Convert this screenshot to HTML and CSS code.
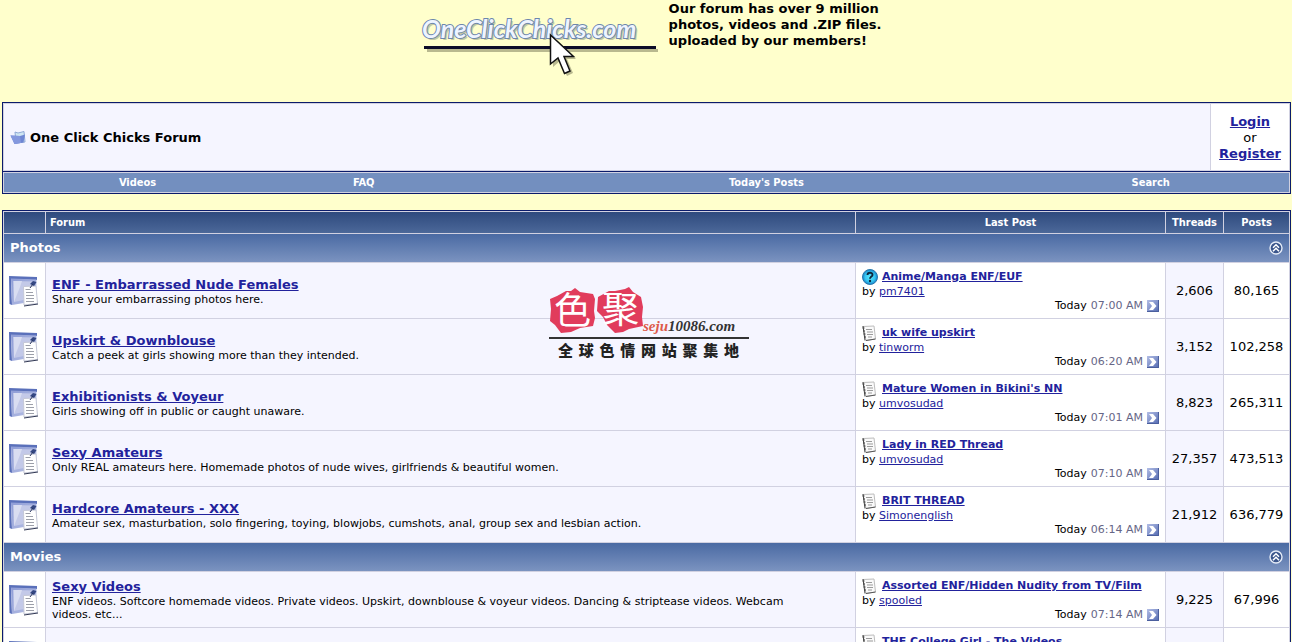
FILE: index.html
```html
<!DOCTYPE html>
<html lang="en">
<head>
<meta charset="utf-8">
<title>One Click Chicks Forum</title>
<link rel="stylesheet" href="styles.css">
</head>
<body>
<svg width="0" height="0" class="defs" aria-hidden="true">
  <defs>
    <linearGradient id="gFolder" x1="0" y1="0" x2="1" y2="1"><stop offset="0" stop-color="#8e9cd6"/><stop offset="1" stop-color="#b9c2e6"/></linearGradient>
    <linearGradient id="gGo" x1="0" y1="0" x2="1" y2="1"><stop offset="0" stop-color="#b4bfe6"/><stop offset="1" stop-color="#5168b0"/></linearGradient>
    <radialGradient id="gAsk"><stop offset="0" stop-color="#5cecff"/><stop offset="0.65" stop-color="#35c5f2"/><stop offset="1" stop-color="#1a7fc4"/></radialGradient>
    <symbol id="forum" viewBox="0 0 30 32">
      <path d="M0 1 28 2 28 5 24 5 2 4 3 30 0.500 29Z" fill="#5a70ba"/>
      <path d="M2 3.500 27.500 4.500 27 26 3 30Z" fill="url(#gFolder)"/>
      <path d="M4.500 6 25 6.500V23L5 27Z" fill="#c3c9e8"/>
      <path d="M4.500 6H13L11 12 5 27Z" fill="#d9ddf1"/>
      <path d="M14.500 11.500 27 11 28.500 28.500 15 30Z" fill="#fff" stroke="#c4c7d6"/>
      <path d="M29 29 15 31" stroke="#333a55" fill="none"/>
      <path d="M16.500 14.500h5M17 17.500h7M17 20.500h8M17 23.500h8M17 26.500h8" stroke="#9c9fa9" fill="none"/>
      <path d="M21 9 24 6 27.500 7 25 11Z" fill="#344782"/><path d="M21 13 24 9" stroke="#28365f"/>
    </symbol>
    <symbol id="note" viewBox="0 0 16 16">
      <path d="M1 1.500 12 1 13.500 14 4 15.500Z" fill="#fafafa" stroke="#bdbdbd"/>
      <path d="M1 1 3 15.500M0.500 3h2M1 6h2M1.500 9h2M2 12h2" stroke="#444" fill="none"/>
      <path d="M4 4.500h6M5 7h6M5 9.500h6M6 12h4" stroke="#9b9b9b" fill="none"/>
      <path d="M4 15.500 13.500 14" stroke="#555"/>
    </symbol>
    <symbol id="ask" viewBox="0 0 16 16">
      <circle cx="8" cy="8" r="7.500" fill="url(#gAsk)" stroke="#2678ad"/>
      <path d="M5.500 6C5.500 3 10.700 3 10.500 6 10.400 7.600 8 7.700 8 9.800" fill="none" stroke="#10263c" stroke-width="1.900"/>
      <circle cx="8" cy="12" r="1.200" fill="#10263c"/>
    </symbol>
    <symbol id="go" viewBox="0 0 12 12">
      <rect width="12" height="12" fill="url(#gGo)"/>
      <path d="M11.500 0V11.500H0" stroke="#4b5f9e" fill="none"/>
      <path d="M2 2H6L9.500 6 6 10H2L5 6Z" fill="#fff"/>
    </symbol>
    <symbol id="up" viewBox="0 0 14 14">
      <circle cx="7" cy="7" r="6" fill="#3b568c" stroke="#e6ecf7" stroke-width="1.400"/>
      <path d="M4 6.700 7 3.800 10 6.700M4 10.200 7 7.300 10 10.200" fill="none" stroke="#fff" stroke-width="1.500"/>
    </symbol>
  </defs>
</svg>

<header class="banner">
  <svg class="logo" viewBox="0 0 240 80" role="img" aria-label="OneClickChicks.com">
    <text class="logo-shadow" x="4" y="40">OneClickChicks.com</text>
    <text class="logo-text" x="2" y="38">OneClickChicks.com</text>
    <path d="M7 50.500H238" stroke="#b9b98f" stroke-width="3"/>
    <path d="M4 47.500H236" stroke="#0c0c28" stroke-width="3"/>
    <path d="M133 37V67L140 61 147 76 153 73 147 59H156Z" fill="#b9b98f"/>
    <path d="M130.500 35V64L138 58 144.500 73.500 150 71 144 56.500H153.500Z" fill="#fff" stroke="#111" stroke-width="1.500"/>
  </svg>
  <p class="tagline">Our forum has over 9 million<br>photos, videos and .ZIP files.<br>uploaded by our members!</p>
</header>

<section class="crumb">
  <h1 class="crumb-title">
    <svg width="16" height="14" viewBox="0 0 16 14" aria-hidden="true"><path d="M5 1 8 2 14 0.500 15 11 6 12Z" fill="#cfe6f2" stroke="#8fa9d6"/><path d="M0.500 4.500 10 5 15 3.500 13.500 11.500 4.500 13Z" fill="#6e86d3"/><path d="M0.500 4.500 10 5 11 12 4.500 13Z" fill="#8498de"/></svg>
    <span>One Click Chicks Forum</span>
  </h1>
  <div class="account"><a href="#">Login</a><span>or</span><a href="#">Register</a></div>
</section>
<nav class="menu"><div class="menu-bar">
  <a class="m1" href="#">Videos</a><a class="m2" href="#">FAQ</a><a class="m3" href="#">Today's Posts</a><a class="m4" href="#">Search</a>
</div></nav>

<main>
<table class="forums">
  <colgroup><col class="c-icon"><col><col class="c-last"><col class="c-threads"><col class="c-posts"></colgroup>
  <thead><tr><th></th><th class="left">Forum</th><th>Last Post</th><th>Threads</th><th>Posts</th></tr></thead>
  <tbody>
  <tr><td class="cat" colspan="5"><div><a href="#">Photos</a><button type="button" aria-label="Collapse Photos"><svg width="14" height="14"><use href="#up"/></svg></button></div></td></tr>
  <tr><td class="icon"><svg width="30" height="32"><use href="#forum"/></svg></td>
    <td class="forum"><a href="#">ENF - Embarrassed Nude Females</a><p>Share your embarrassing photos here.</p></td>
    <td class="last"><div class="thread"><svg width="16" height="16"><use href="#ask"/></svg><a href="#">Anime/Manga ENF/EUF</a></div><div class="by">by <a href="#">pm7401</a></div><div class="time">Today <span>07:00 AM</span><svg width="12" height="12"><use href="#go"/></svg></div></td>
    <td class="num alt">2,606</td><td class="num">80,165</td></tr>
  <tr><td class="icon"><svg width="30" height="32"><use href="#forum"/></svg></td>
    <td class="forum"><a href="#">Upskirt &amp; Downblouse</a><p>Catch a peek at girls showing more than they intended.</p></td>
    <td class="last"><div class="thread"><svg width="16" height="16"><use href="#note"/></svg><a href="#">uk wife upskirt</a></div><div class="by">by <a href="#">tinworm</a></div><div class="time">Today <span>06:20 AM</span><svg width="12" height="12"><use href="#go"/></svg></div></td>
    <td class="num alt">3,152</td><td class="num">102,258</td></tr>
  <tr><td class="icon"><svg width="30" height="32"><use href="#forum"/></svg></td>
    <td class="forum"><a href="#">Exhibitionists &amp; Voyeur</a><p>Girls showing off in public or caught unaware.</p></td>
    <td class="last"><div class="thread"><svg width="16" height="16"><use href="#note"/></svg><a href="#">Mature Women in Bikini's NN</a></div><div class="by">by <a href="#">umvosudad</a></div><div class="time">Today <span>07:01 AM</span><svg width="12" height="12"><use href="#go"/></svg></div></td>
    <td class="num alt">8,823</td><td class="num">265,311</td></tr>
  <tr><td class="icon"><svg width="30" height="32"><use href="#forum"/></svg></td>
    <td class="forum"><a href="#">Sexy Amateurs</a><p>Only REAL amateurs here. Homemade photos of nude wives, girlfriends &amp; beautiful women.</p></td>
    <td class="last"><div class="thread"><svg width="16" height="16"><use href="#note"/></svg><a href="#">Lady in RED Thread</a></div><div class="by">by <a href="#">umvosudad</a></div><div class="time">Today <span>07:10 AM</span><svg width="12" height="12"><use href="#go"/></svg></div></td>
    <td class="num alt">27,357</td><td class="num">473,513</td></tr>
  <tr><td class="icon"><svg width="30" height="32"><use href="#forum"/></svg></td>
    <td class="forum"><a href="#">Hardcore Amateurs - XXX</a><p>Amateur sex, masturbation, solo fingering, toying, blowjobs, cumshots, anal, group sex and lesbian action.</p></td>
    <td class="last"><div class="thread"><svg width="16" height="16"><use href="#note"/></svg><a href="#">BRIT THREAD</a></div><div class="by">by <a href="#">Simonenglish</a></div><div class="time">Today <span>06:14 AM</span><svg width="12" height="12"><use href="#go"/></svg></div></td>
    <td class="num alt">21,912</td><td class="num">636,779</td></tr>
  </tbody>
  <tbody>
  <tr><td class="cat" colspan="5"><div><a href="#">Movies</a><button type="button" aria-label="Collapse Movies"><svg width="14" height="14"><use href="#up"/></svg></button></div></td></tr>
  <tr><td class="icon"><svg width="30" height="32"><use href="#forum"/></svg></td>
    <td class="forum"><a href="#">Sexy Videos</a><p>ENF videos. Softcore homemade videos. Private videos. Upskirt, downblouse &amp; voyeur videos. Dancing &amp; striptease videos. Webcam videos.&nbsp;etc...</p></td>
    <td class="last"><div class="thread"><svg width="16" height="16"><use href="#note"/></svg><a href="#">Assorted ENF/Hidden Nudity from TV/Film</a></div><div class="by">by <a href="#">spooled</a></div><div class="time">Today <span>07:14 AM</span><svg width="12" height="12"><use href="#go"/></svg></div></td>
    <td class="num alt">9,225</td><td class="num">67,996</td></tr>
  <tr><td class="icon"><svg width="30" height="32"><use href="#forum"/></svg></td>
    <td class="forum"></td>
    <td class="last top"><div class="thread"><svg width="16" height="16"><use href="#note"/></svg><a href="#">THE College Girl - The Videos</a></div></td>
    <td class="num alt"></td><td class="num"></td></tr>
  </tbody>
</table>
</main>

<aside class="stamp">
  <svg width="200" height="50" viewBox="0 0 200 50">
    <path d="M1 12 8 9 17 4 22 4 26 1 31 5 44 7 46 12 45 24 46 31 44 39 31 41 22 45 12 46 6 38 1 34 2 22Z" fill="#e13c5c"/>
    <path d="M49 10 60 4 66 4 76 2 80 0 84 5 92 10 94 20 93 30 94 39 80 42 74 45 66 46 58 38 54 30 48 24Z" fill="#e13c5c"/>
    <text class="seal" x="5" y="37">色</text><text class="seal" x="53" y="36">聚</text>
    <text class="site" x="94" y="44"><tspan class="site-red">seju</tspan>10086.com</text>
  </svg>
  <p class="slogan">全球色情网站聚集地</p>
</aside>
</body>
</html>
```
FILE: styles.css
```css
* { box-sizing: border-box; }
html { overflow: hidden; height: 100%; }
body {
  position: relative;
  height: 100%;
  margin: 0 1px 0 2px;
  background: #ffffcc;
  color: #000;
  font: 13px/16px Verdana, "DejaVu Sans", sans-serif;
}
p, h1 { margin: 0; }
a { color: #22229c; }
svg { flex: none; }
.defs { position: absolute; }

.banner {
  display: flex;
  justify-content: center;
  gap: 9px;
  height: 102px;
  padding-left: 8px;
}
.logo { width: 240px; height: 80px; }
.logo text { font: italic bold 25px Lato, sans-serif; }
.logo-shadow { fill: #c4c8a4; }
.logo-text { fill: #eef4ff; stroke: #6d87ac; stroke-width: 2px; paint-order: stroke; }
.tagline { padding-top: 1px; font-weight: bold; white-space: nowrap; }

.crumb {
  display: flex;
  gap: 1px;
  padding: 1px;
  border: 1px solid #0b1b6b;
  background: #d1d1e1;
}
.crumb-title {
  display: flex;
  flex: 1;
  align-items: center;
  gap: 4px;
  padding: 2px 6px 0;
  background: #f5f5ff;
  font-size: 13px;
}
.account {
  display: flex;
  flex-direction: column;
  align-items: center;
  justify-content: center;
  width: 78px;
  min-height: 66px;
  padding-top: 2px;
  background: #fff;
}
.account a { font-weight: bold; }

.menu {
  padding: 1px;
  border: 1px solid #0b1b6b;
  border-top: 0;
  background: #d1d1e1;
}
.menu-bar { display: flex; padding: 2px 5% 1px 0; background: #738fbf; }
.menu a {
  flex: 1 1 0;
  color: #fff;
  font: bold 11px/16px Tahoma, "DejaVu Sans Condensed", "DejaVu Sans", sans-serif;
  text-align: center;
  text-decoration: none;
}
.menu .m1 { flex-grow: 267; }
.menu .m2 { flex-grow: 185; }
.menu .m3 { flex-grow: 620; }
.menu .m4 { flex-grow: 148; }

.forums {
  width: 100%;
  margin-top: 16px;
  table-layout: fixed;
  border: 1px solid #0b1b6b;
  border-spacing: 1px;
  background: #d1d1e1;
}
.c-icon { width: 41px; }
.c-last { width: 309px; }
.c-threads { width: 57px; }
.c-posts { width: 65px; }
.forums th {
  height: 21px;
  padding: 0 4px;
  background: linear-gradient(#2e4a7e, #4c6899);
  color: #fff;
  font: bold 11px/13px Tahoma, "DejaVu Sans Condensed", "DejaVu Sans", sans-serif;
}
.forums .left { text-align: left; }
.forums td { padding: 0 6px; background: #fff; }
.forums .cat { height: 28px; background: linear-gradient(#4a6aa3, #7b93c0); }
.cat div { display: flex; align-items: center; justify-content: space-between; }
.cat a { color: #fff; font-weight: bold; text-decoration: none; }
.cat button { display: flex; padding: 0; border: 0; background: none; }
.forums .icon { height: 55px; padding: 0 5px; }
.icon svg { display: block; }
.forums .forum { padding-top: 1px; background: #f5f5ff; }
.forum a { display: inline-block; font-weight: bold; }
.forum p { font-size: 11px; line-height: 13px; }
.last { font-size: 11px; }
.forums .top { padding-top: 6px; vertical-align: top; }
.thread { display: flex; gap: 4px; height: 16px; font-weight: bold; white-space: nowrap; }
.thread a { line-height: 15px; }
.by { line-height: 14px; }
.time { display: flex; justify-content: flex-end; align-items: center; gap: 4px; line-height: 13px; }
.time span { color: #666686; }
.forums .num { padding: 0; text-align: center; }
.forums .alt { background: #f5f5ff; }

.stamp { position: absolute; top: 287px; left: 547px; width: 200px; }
.stamp svg { display: block; }
.seal { fill: #fff; font: 37px "Noto Sans CJK SC", sans-serif; }
.site { fill: #333; font: italic bold 15px "Liberation Serif", serif; }
.site-red { fill: #dd5a4a; }
.slogan {
  padding: 1px 10px 0 9px;
  border-top: 2px solid #333;
  color: #222;
  font: 900 15px/20px "Noto Sans CJK SC", sans-serif;
  text-align-last: justify;
}
```
